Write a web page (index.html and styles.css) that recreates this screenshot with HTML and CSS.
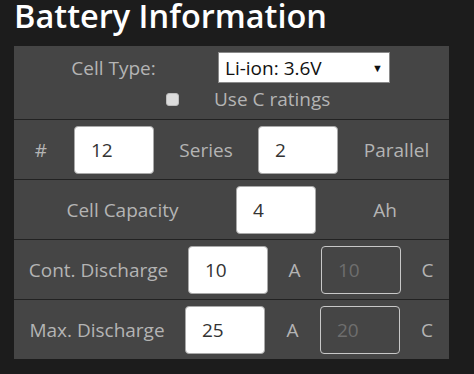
FILE: index.html
```html
<!DOCTYPE html>
<html>
<head>
<meta charset="utf-8">
<link rel="stylesheet" href="styles.css">
</head>
<body>
<div class="page">
  <h1 class="title">Battery Information</h1>
  <div class="panel">
    <div class="row-type">
      <div class="type-line">
        <span class="lbl type-lbl">Cell Type:</span>
        <div class="select"><span>Li-ion: 3.6V</span><span class="arrow">▼</span></div>
      </div>
      <div class="check-line">
        <span class="checkbox"></span>
        <span class="lbl check-lbl">Use C ratings</span>
      </div>
    </div>
    <div class="row row-cells">
      <span class="lbl">#</span>
      <div class="cell"><span class="field">12</span></div>
      <span class="lbl">Series</span>
      <div class="cell"><span class="field">2</span></div>
      <span class="lbl">Parallel</span>
    </div>
    <div class="row row-cap">
      <span class="lbl">Cell Capacity</span>
      <div class="cell"><span class="field">4</span></div>
      <span class="lbl">Ah</span>
    </div>
    <div class="row row-cont">
      <span class="lbl">Cont. Discharge</span>
      <div class="cell"><span class="field">10</span></div>
      <span class="lbl">A</span>
      <div class="cell"><span class="field disabled">10</span></div>
      <span class="lbl">C</span>
    </div>
    <div class="row row-max">
      <span class="lbl">Max. Discharge</span>
      <div class="cell"><span class="field">25</span></div>
      <span class="lbl">A</span>
      <div class="cell"><span class="field disabled">20</span></div>
      <span class="lbl">C</span>
    </div>
  </div>
</div>
</body>
</html>
```
FILE: styles.css
```css
* { box-sizing: border-box; }
html, body { margin: 0; padding: 0; }
body {
  background: #1c1c1c;
  font-family: "Open Sans", "Noto Sans", sans-serif;
  width: 474px;
  height: 374px;
  overflow: hidden;
}
.page { padding: 0 0 0 14px; }
.title {
  margin: 0;
  height: 46px;
  color: #ffffff;
  font-size: 32.5px;
  font-weight: 600;
  line-height: 31px;
  white-space: nowrap;
}
.panel {
  width: 435px;
  background: #454545;
}
.row {
  display: grid;
  align-items: center;
  justify-items: center;
  height: 60px;
  border-top: 1px solid #222222;
}
.lbl {
  color: #b4b4b4;
  font-size: 19px;
  line-height: 26px;
}
.cell { display: flex; justify-content: center; width: 100%; }
.field {
  display: flex;
  align-items: center;
  width: 80px;
  height: 48px;
  background: #ffffff;
  border: 1px solid #a9a9a9;
  border-radius: 4px;
  padding-left: 16px;
  color: #333333;
  font-size: 19px;
}
.field.disabled {
  background: transparent;
  border-color: #c8c8c8;
  color: #6e6e6e;
}
.row-type {
  height: 73px;
  padding-top: 6px;
}
.type-line { display: flex; align-items: center; height: 31px; width: 100%; }
.type-lbl { width: 199px; text-align: center; }
.select {
  margin-left: 5px;
  width: 172px;
  height: 31px;
  background: #ffffff;
  border: 1px solid #8a8a8a;
  display: flex;
  align-items: center;
  justify-content: space-between;
  padding: 0 6px 0 6px;
  color: #111111;
  font-size: 19px;
}
.arrow { font-size: 11px; color: #111; }
.check-line { display: flex; align-items: center; height: 30px; padding-top: 2px; width: 100%; }
.checkbox {
  margin-left: 152px;
  width: 13px;
  height: 13px;
  background: #dcdcdc;
  border: 1px solid #bdbdbd;
  border-radius: 3px;
}
.check-lbl { margin-left: 35px; }
.row-cells { grid-template-columns: 54px 92px 92px 92px 105px; }
.row-cap { grid-template-columns: 217px 90px 128px; }
.row-cont { grid-template-columns: 169px 90px 43px 90px 43px; }
.row-max { grid-template-columns: 166px 90px 45px 90px 44px; }
```
